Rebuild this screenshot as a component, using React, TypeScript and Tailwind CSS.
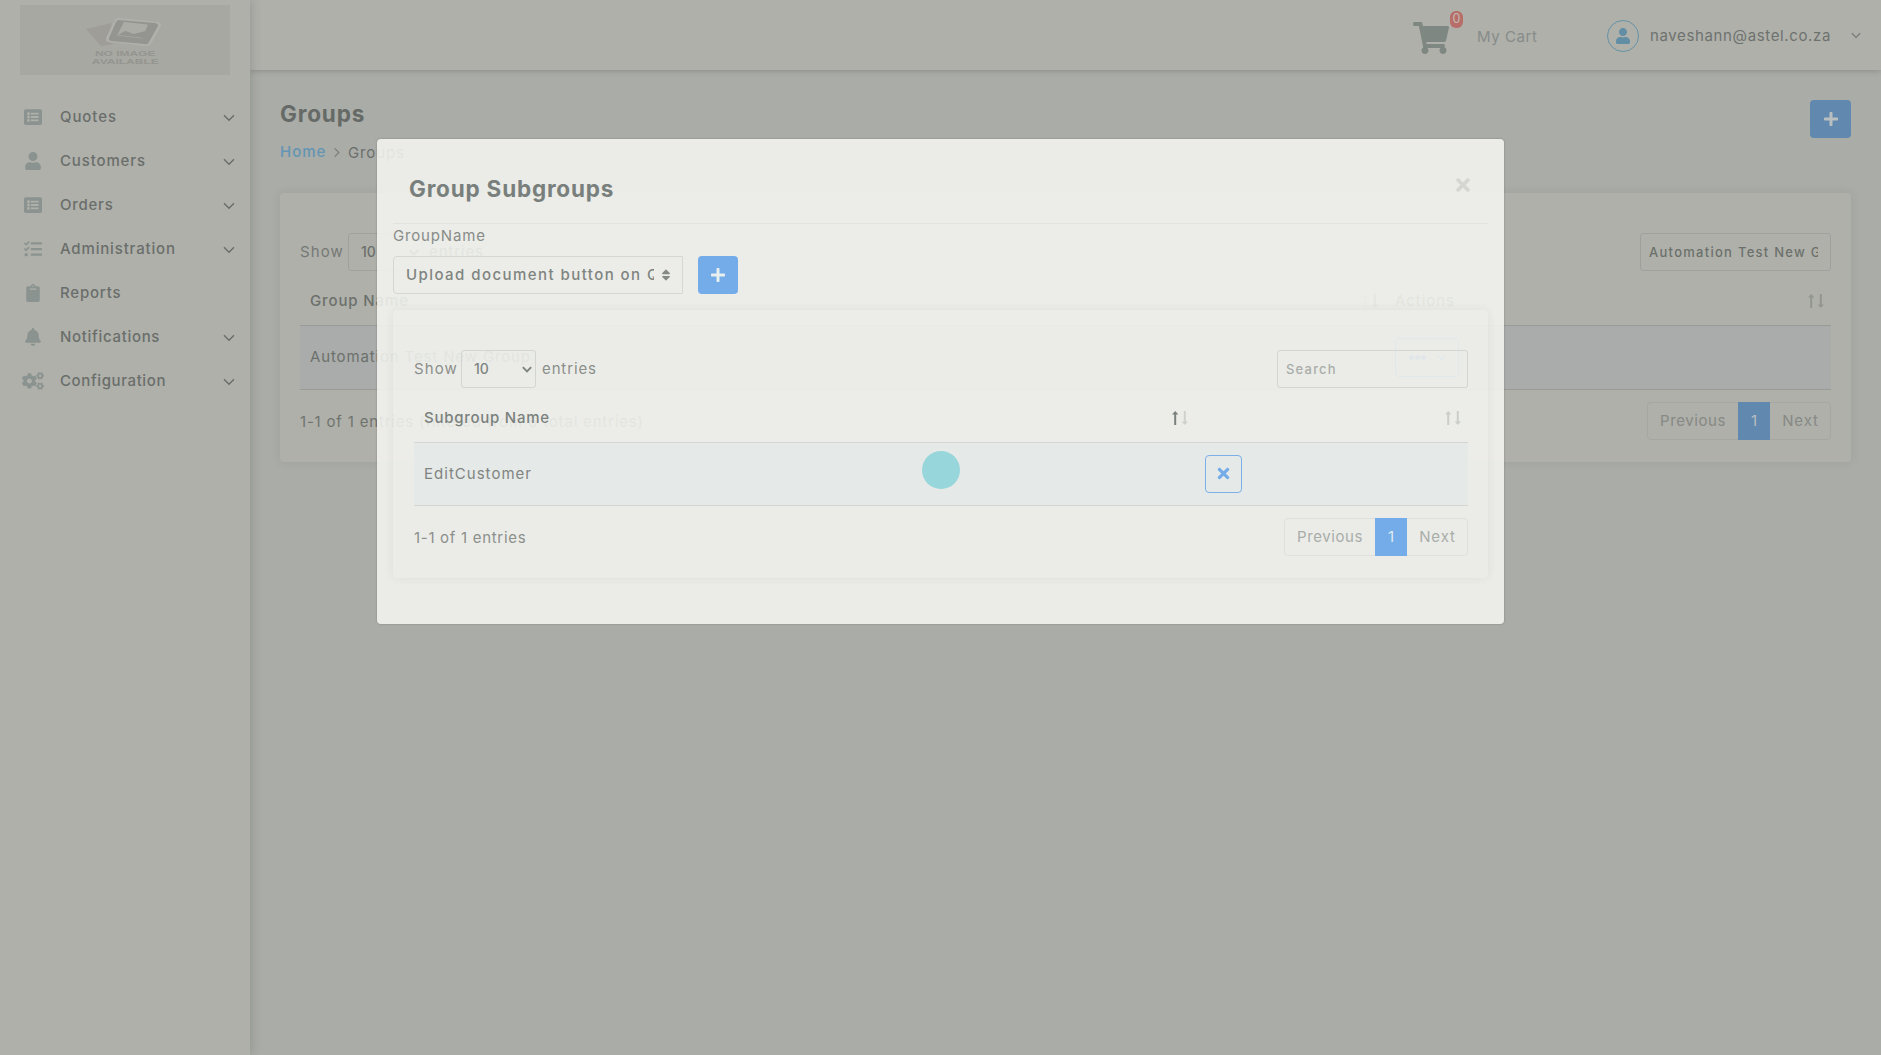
import type { ReactNode } from "react";
import {
  FaListAlt,
  FaUser,
  FaTasks,
  FaClipboard,
  FaBell,
  FaCogs,
  FaShoppingCart,
  FaPlus,
  FaTimes,
  FaSort,
} from "react-icons/fa";

const NAV = [
  { label: "Quotes", icon: <FaListAlt size={18} />, track: "tracking-[0.91px]", sub: true },
  { label: "Customers", icon: <FaUser size={18} />, track: "tracking-[0.86px]", sub: true },
  { label: "Orders", icon: <FaListAlt size={18} />, track: "tracking-[0.75px]", sub: true },
  { label: "Administration", icon: <FaTasks size={18} />, track: "tracking-[0.84px]", sub: true },
  { label: "Reports", icon: <FaClipboard size={18} />, track: "tracking-[0.79px]", sub: false },
  { label: "Notifications", icon: <FaBell size={18} />, track: "tracking-[0.69px]", sub: true },
  { label: "Configuration", icon: <FaCogs size={22} />, track: "tracking-[0.61px]", sub: true },
];

function Chevron({ className = "", bold = false }: { className?: string; bold?: boolean }) {
  return (
    <svg viewBox="0 0 12 8" className={"shrink-0 " + className} fill="none" stroke="currentColor" strokeWidth={bold ? 2.4 : 1.5}>
      <path d="M1 1.2 L6 6.2 L11 1.2" />
    </svg>
  );
}

function SortArrows({ up, down }: { up: string; down: string }) {
  return (
    <svg viewBox="0 0 16 14" className="h-[14px] w-4 shrink-0">
      <path className={up} d="M3.2 0 L6.4 3.4 H4.2 V14 H2.2 V3.4 H0 Z" />
      <path className={down} d="M12.8 14 L16 10.6 H13.8 V0 H11.8 V10.6 H9.6 Z" />
    </svg>
  );
}

function Logo() {
  return (
    <div className="flex h-[70px] w-[210px] flex-col items-center bg-[#a7a8a2] pt-3">
      <svg viewBox="0 0 78 30" className="h-[30px] w-[78px]">
        <path d="M0 12 L26 6 L20 24 L28 27 L15 29 Z" fill="#9f9d98" />
        <path d="M33 1 L72 5 Q76 6 75 9 L65 27 Q63 29 60 29 L23 25 Q19 24 20 21 L29 3 Q30 1 33 1 Z" fill="#b0b1ab" />
        <path d="M33 3 L69 6 Q73 7 72 9 L63 25 Q62 28 58 27 L25 24 Q22 23 23 21 L30 5 Q31 3 33 3 Z" fill="#949590" />
        <path d="M38 5 L62 7.500 L56 21.500 L31 18.500 Z" fill="#abaca6" />
        <path d="M32 18 L39 14 L43 15 L47 17 L60 14 L57 21 Z" fill="#949590" />
      </svg>
      <div className="mt-[3px] flex scale-x-[1.5] flex-col items-center font-['Liberation_Sans'] text-[8px] leading-[7.5px] font-bold text-[#949590]">
        <span className="whitespace-nowrap">NO IMAGE</span>
        <span className="whitespace-nowrap">AVAILABLE</span>
      </div>
    </div>
  );
}

function Sidebar() {
  return (
    <aside className="relative z-10 flex w-[250px] shrink-0 flex-col bg-[#afb0aa] pt-[5px] shadow-[0_0_10px_rgba(60,60,60,0.25)]">
      <div className="flex justify-center">
        <Logo />
      </div>
      <nav className="mt-5 flex flex-col">
        {NAV.map((n) => (
          <div key={n.label} className="flex h-11 items-center pr-[15px] font-medium text-[#6a6e6b]">
            <span className="ml-[21px] flex w-6 justify-center text-[#8b9390]">{n.icon}</span>
            <span className={"ml-[15px] flex-1 whitespace-nowrap " + n.track}>{n.label}</span>
            {n.sub && <Chevron className="mt-px h-2 w-3" />}
          </div>
        ))}
      </nav>
    </aside>
  );
}

function TopBar() {
  return (
    <header className="flex h-[70px] shrink-0 items-center justify-end bg-[#afb0aa] pr-5 shadow-[0_1px_5px_rgba(60,60,60,0.28)]">
      <div className="relative mt-1.5 mr-7">
        <FaShoppingCart size={36} className="text-[#7f8783]" />
        <span className="absolute -top-[9px] left-[37px] flex h-[17px] w-[13px] items-center justify-center rounded-[6px] bg-[#b76d68] text-[12.5px] leading-none text-[#c2bbb5]">
          0
        </span>
      </div>
      <span className="mt-[3px] w-[130px] tracking-[0.59px] whitespace-nowrap text-[#868c89]">My Cart</span>
      <span className="mt-px flex size-8 items-center justify-center rounded-full border border-[#6792a6] text-[#618da5]">
        <FaUser size={16} />
      </span>
      <span className="mt-0.5 ml-[11px] w-[201px] tracking-[0.63px] whitespace-nowrap text-[#6e726f]">naveshann@astel.co.za</span>
      <Chevron className="h-[7px] w-2.5 text-[#737774]" />
    </header>
  );
}

function EntriesSelect({ tone }: { tone: string }) {
  return (
    <span className={"flex h-[38px] w-[75px] items-center justify-between rounded-[3px] border pr-[3px] pl-3 text-[14px] font-medium " + tone}>
      10
      <Chevron bold className="h-[7px] w-[10px]" />
    </span>
  );
}

function Pagination({ border, text, active }: { border: string; text: string; active: string }) {
  return (
    <div className={"flex h-[38px] w-[184px] items-stretch rounded-[4px] border " + border + " " + text}>
      <span className="flex w-[90px] items-center justify-center tracking-[0.6px]">Previous</span>
      <span className={"-my-px flex w-8 items-center justify-center " + active}>1</span>
      <span className="flex flex-1 items-center justify-center pl-px tracking-[0.9px]">Next</span>
    </div>
  );
}

function GroupsPage() {
  return (
    <main className="flex flex-col pr-[30px] pl-[30px]">
      <div className="flex h-[123px] justify-between">
        <div>
          <h1 className="mt-[29px] text-[22.5px] leading-[30px] font-bold tracking-[0.85px] text-[#666a67]">Groups</h1>
          <div className="mt-[11px] flex items-center leading-6 text-[#6b6f6c]">
            <span className="-mt-0.5 w-[52px] font-medium tracking-[1px] text-[#6395b4]">Home</span>
            <Chevron className="-mt-px h-[7px] w-[10px] -rotate-90 text-[#7b7f7b]" />
            <span className="mt-px ml-1.5 tracking-[0.89px]">Groups</span>
          </div>
        </div>
        <button className="mt-[30px] flex h-[38px] w-[41px] items-center justify-center rounded-[4px] bg-[#6188ae] pb-px text-[#b9bfc0]">
          <FaPlus size={16} />
        </button>
      </div>
      <section className="flex h-[269px] flex-col rounded-[4px] bg-[#afb0aa] px-5 pt-10 text-[#6c706c] shadow-[0_0_10px_rgba(60,60,60,0.09)]">
        <div className="flex h-[38px] items-center justify-between">
          <div className="flex items-center">
            <span className="w-12 tracking-[1.1px] text-[#757975]">Show</span>
            <EntriesSelect tone="border-[#a0a19d]" />
            <span className="ml-1.5 tracking-[0.88px]">entries</span>
          </div>
          <div className="flex h-[38px] w-[191px] items-center rounded-[3px] border border-[#a0a19d] pr-3 pl-2 text-[13px] font-medium">
            <span className="w-full overflow-hidden tracking-[1.27px] whitespace-nowrap text-[#6c706c]">Automation Test New Group</span>
          </div>
        </div>
        <div className="flex h-[54px] items-center pt-1.5 font-medium">
          <div className="flex w-[1085px] items-center justify-between pr-[7px] pl-2.5">
            <span className="tracking-[0.88px]">Group Name</span>
            <SortArrows up="fill-[#a0a29e]" down="fill-[#7d817d]" />
          </div>
          <div className="flex flex-1 items-center justify-between pr-[7px] pl-2.5">
            <span className="font-normal tracking-[0.96px]">Actions</span>
            <SortArrows up="fill-[#93958f]" down="fill-[#93958f]" />
          </div>
        </div>
        <div className="flex h-[65px] items-center border-y border-[#999b97] bg-[#a9acaa] pb-px">
          <span className="w-[1085px] pl-2.5 tracking-[0.86px]">Automation Test New Group</span>
          <span className="ml-2.5 flex h-[39px] w-16 items-center justify-center gap-2.5 rounded-[4px] border border-[#6b90b0] text-[#6188ae]">
            <span className="flex gap-px">
              <i className="size-[5px] rounded-full bg-current" />
              <i className="size-[5px] rounded-full bg-current" />
              <i className="size-[5px] rounded-full bg-current" />
            </span>
            <Chevron className="h-[7px] w-2.5" />
          </span>
        </div>
        <div className="mt-3 flex h-[38px] items-center justify-between">
          <span className="mt-0.5 tracking-[0.81px] whitespace-nowrap text-[#70746f]">1-1 of 1 entries (filtered from 6 total entries)</span>
          <Pagination border="border-[#a6a7a2]" text="text-[#868985]" active="bg-[#6188ae] text-[#b9bfc0]" />
        </div>
      </section>
    </main>
  );
}

function Overlay({ children }: { children: ReactNode }) {
  return <div className="absolute inset-0 z-20 flex items-start justify-center pt-[139px]">{children}</div>;
}

function SubgroupsModal() {
  return (
    <div className="flex h-[485px] w-[1127px] flex-col rounded-[4px] bg-[#f6f7f2]/86 px-4 text-[#7f8481] shadow-[0_0_2px_rgba(60,60,60,0.4)]">
      <div className="flex h-[85px] items-start justify-between border-b border-[#e2e3df] pr-[15px] pl-4">
        <h2 className="mt-[35px] text-[22.5px] leading-[30px] font-bold tracking-[0.8px] text-[#797f7c]">Group Subgroups</h2>
        <FaTimes size={20} className="mt-9 text-[#d5d6d2]" />
      </div>
      <label className="mt-px leading-[22px] tracking-[0.84px] text-[#888c88]">GroupName</label>
      <div className="mt-[9px] flex h-[38px] items-center">
        <div className="flex h-[38px] w-[290px] items-center rounded-l-[4px] border border-[#d6d7d4] pl-3">
          <span className="w-[248px] overflow-hidden font-medium tracking-[1.44px] whitespace-nowrap">Upload document button on Quotes</span>
          <FaSort size={14} className="ml-[5px] text-[#858a87]" />
        </div>
        <button className="ml-[15px] flex h-[38px] w-10 items-center justify-center rounded-[4px] bg-[#73ace9] pr-px pb-px text-[#e8efee]">
          <FaPlus size={16} />
        </button>
      </div>
      <section className="mt-4 flex h-[268px] flex-col rounded-[4px] pt-10 pr-5 pl-[21px] shadow-[0_0_10px_rgba(60,60,60,0.07)]">
        <div className="flex h-[38px] items-center justify-between">
          <div className="flex items-center text-[#8b8f8b]">
            <span className="w-[47px] tracking-[1.1px]">Show</span>
            <EntriesSelect tone="border-[#d3d5d2] text-[#7f8481]" />
            <span className="ml-1.5 tracking-[0.88px]">entries</span>
          </div>
          <div className="flex h-[38px] w-[191px] items-center rounded-[3px] border border-[#d3d5d2] px-2 text-[13px] font-medium tracking-[1.2px] text-[#a9ada9]">
            Search
          </div>
        </div>
        <div className="flex h-[54px] items-center pt-1.5 font-medium">
          <div className="flex w-[781px] items-center justify-between pr-[7px] pl-2.5">
            <span className="tracking-[0.74px] text-[#7a807d]">Subgroup Name</span>
            <SortArrows up="fill-[#7a807d]" down="fill-[#cfd1cd]" />
          </div>
          <div className="flex flex-1 items-center justify-end pr-[7px]">
            <SortArrows up="fill-[#cbcdc9]" down="fill-[#cbcdc9]" />
          </div>
        </div>
        <div className="flex h-16 items-center border-y border-[#d3d6d3] bg-[#e5e9e8]">
          <span className="w-[781px] pl-2.5 tracking-[1.02px]">EditCustomer</span>
          <button className="ml-2.5 flex h-[38px] w-[37px] items-center justify-center rounded-[4px] border border-[#7cb0e9] pr-px pb-px text-[#73ace9]">
            <FaTimes size={17} />
          </button>
        </div>
        <div className="mt-3 flex h-[38px] items-center justify-between">
          <span className="mt-0.5 tracking-[0.7px] text-[#8b8f8b]">1-1 of 1 entries</span>
          <Pagination border="border-[#dfe0dc]" text="text-[#a9ada9]" active="bg-[#73ace9] text-[#e0eaf0]" />
        </div>
      </section>
    </div>
  );
}

export default function App() {
  return (
    <div className="relative flex h-[1055px] w-full overflow-hidden bg-[#aaaca7] font-['Inter',sans-serif] text-[15px] leading-5">
      <Sidebar />
      <div className="flex flex-1 flex-col">
        <TopBar />
        <GroupsPage />
      </div>
      <Overlay>
        <SubgroupsModal />
      </Overlay>
      <div className="absolute top-[451px] left-[922px] z-30 size-[38px] rounded-full bg-[#97d6da]" />
    </div>
  );
}
